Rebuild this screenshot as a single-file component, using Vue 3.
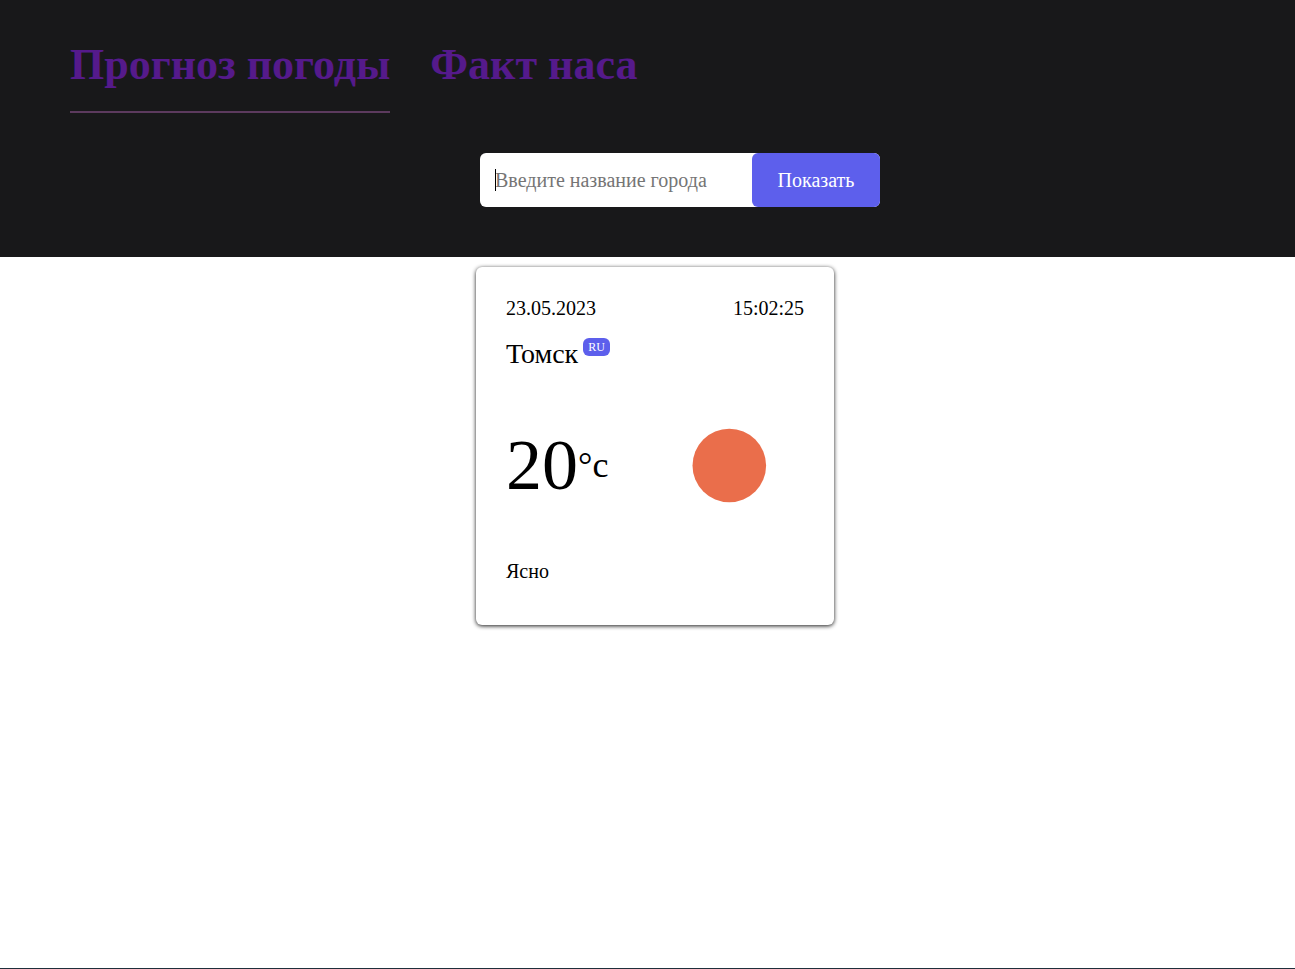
<script setup>
import { ref } from 'vue'

const city = ref('')
const tabs = [
  { label: 'Прогноз погоды', href: '#weather', active: true },
  { label: 'Факт наса', href: '#nasa', active: false },
]
const weather = {
  date: '23.05.2023',
  time: '15:02:25',
  city: 'Томск',
  country: 'RU',
  temp: 20,
  description: 'Ясно',
}
</script>

<template>
  <div class="page">
    <header class="header">
      <nav class="tabs">
        <a
          v-for="tab in tabs"
          :key="tab.href"
          :href="tab.href"
          class="tab"
          :class="{ active: tab.active }"
        >{{ tab.label }}</a>
      </nav>
      <form class="search" @submit.prevent>
        <input
          v-model="city"
          class="search-input"
          type="text"
          aria-label="Название города"
          placeholder="Введите название города"
        />
        <span class="caret" aria-hidden="true"></span>
        <button class="search-button" type="submit">Показать</button>
      </form>
    </header>
    <main class="content">
      <article class="card">
        <div class="row">
          <time>{{ weather.date }}</time>
          <time>{{ weather.time }}</time>
        </div>
        <div class="place">
          <span class="city">{{ weather.city }}</span>
          <span class="country">{{ weather.country }}</span>
        </div>
        <div class="now">
          <div class="temp">
            <span class="degrees">{{ weather.temp }}</span>
            <span class="unit">°c</span>
          </div>
          <svg class="icon" viewBox="0 0 150 150" aria-hidden="true">
            <circle cx="75.3" cy="75.5" r="36.8" fill="#ea6e4b" />
          </svg>
        </div>
        <p class="description">{{ weather.description }}</p>
      </article>
    </main>
  </div>
</template>

<style>
body {
  margin: 0;
  background: #fff;
}
</style>

<style scoped>
.page {
  box-sizing: border-box;
  min-height: 100vh;
  border-bottom: 1px solid #1f2f3c;
  color: #000;
  font-family: "Liberation Serif", "Times New Roman", serif;
  font-size: 20px;
}
.header {
  padding: 40px 5px 50px 70px;
  background: #18181a;
}
.tabs {
  display: flex;
  gap: 40px;
}
.tab {
  padding-bottom: 21px;
  border-bottom: 2px solid transparent;
  color: #551a8b;
  font-size: 44px;
  font-weight: 700;
  line-height: 50px;
  text-decoration: none;
}
.tab.active {
  border-bottom-color: #5c3a5e;
}
.search {
  position: relative;
  display: flex;
  width: 400px;
  max-width: 100%;
  height: 54px;
  margin: 40px auto 0;
  border-radius: 6px;
  background: #fff;
}
.search-input {
  flex: 1;
  min-width: 0;
  padding: 0 15px;
  border: 0;
  outline: 0;
  background: transparent;
  font: inherit;
}
.search-input::placeholder {
  color: #757575;
}
.caret {
  position: absolute;
  top: 16px;
  left: 15px;
  width: 1px;
  height: 22px;
  background: #000;
}
.search-button {
  min-width: 128px;
  padding: 0 25px;
  border: 0;
  border-radius: 6px;
  background: #5d5fec;
  color: #fff;
  font: inherit;
}
.content {
  padding: 10px 0 10px 15px;
}
.card {
  box-sizing: border-box;
  width: 358px;
  max-width: 100%;
  margin: 0 auto;
  padding: 30px 30px 43px;
  border-radius: 6px;
  box-shadow: 0 1px 4px rgba(0, 0, 0, 0.9);
}
.row {
  display: flex;
  justify-content: space-between;
  line-height: 22px;
}
.place {
  display: flex;
  align-items: flex-start;
  gap: 5px;
  margin-top: 19px;
}
.city {
  font-size: 28px;
  line-height: 32px;
}
.country {
  padding: 0 5px;
  border-radius: 6px;
  background: #5d5fec;
  color: #fff;
  font-size: 12px;
  line-height: 18px;
}
.now {
  display: flex;
  align-items: center;
  justify-content: space-between;
  margin-top: 20px;
}
.temp {
  display: flex;
  align-items: center;
}
.degrees {
  font-size: 72px;
  line-height: 80px;
}
.unit {
  font-size: 36px;
  line-height: 40px;
}
.icon {
  width: 150px;
  height: 150px;
}
.description {
  margin: 20px 0 0;
  line-height: 22px;
}
</style>
